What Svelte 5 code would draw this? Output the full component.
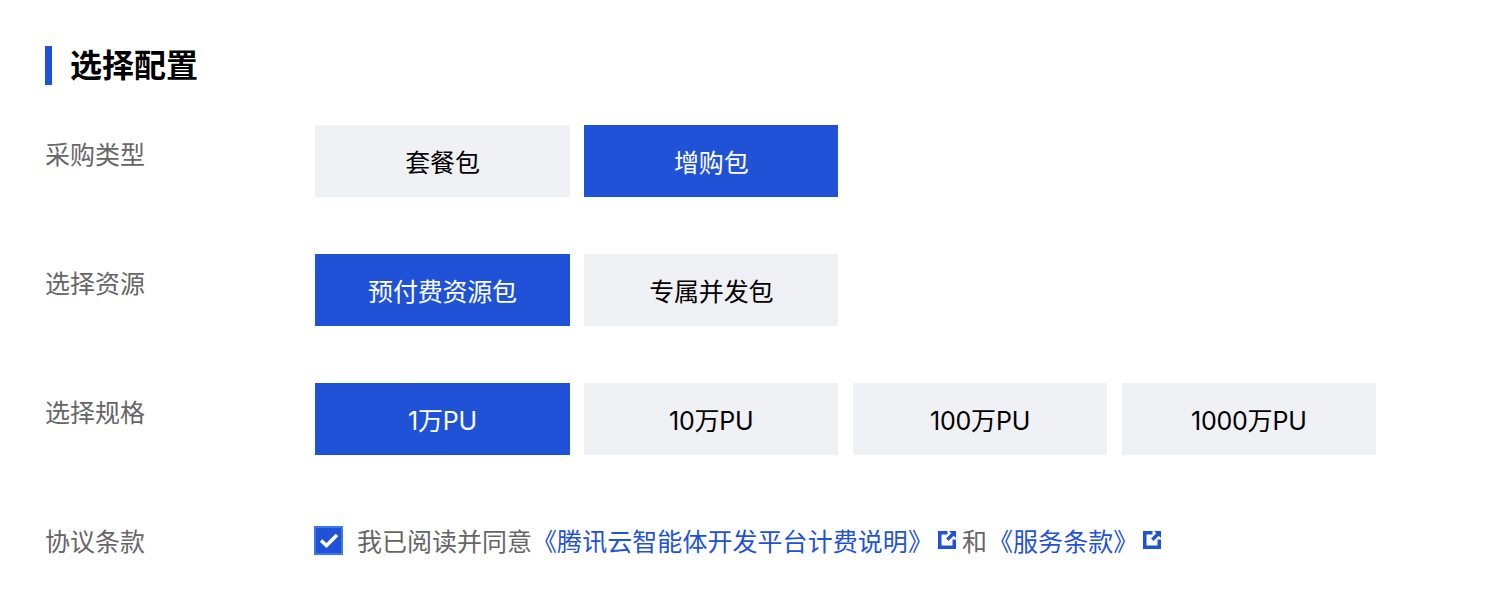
<script lang="ts">
  const ROWS = [
    { label: '采购类型', options: ['套餐包', '增购包'], active: 1 },
    { label: '选择资源', options: ['预付费资源包', '专属并发包'], active: 0 },
    { label: '选择规格', options: ['1万PU', '10万PU', '100万PU', '1000万PU'], active: 0 },
  ];
</script>

{#snippet linkIcon()}
  <svg class="ext" viewBox="0 0 18 18" aria-hidden="true">
    <path fill="#1f52d6" fill-rule="evenodd" d="M0 0h9.500v3.500H3.500v11h11V8.500H18V18H0z" />
    <path fill="#1f52d6" d="M11 0h7v7l-2.300-2.300-5.200 5.200-2.400-2.400 5.200-5.200z" />
  </svg>
{/snippet}

<main class="page">
  <h2 class="title">选择配置</h2>

  {#each ROWS as row (row.label)}
    <div class="row">
      <div class="label">{row.label}</div>
      <div class="options">
        {#each row.options as opt, i (opt)}
          <button type="button" class="option" class:active={i === row.active}>{opt}</button>
        {/each}
      </div>
    </div>
  {/each}

  <div class="row agree">
    <div class="label">协议条款</div>
    <div class="terms">
      <span class="check">
        <svg viewBox="0 0 20 15" aria-hidden="true">
          <path d="M2 7.500l5.500 5L18 2" fill="none" stroke="#fff" stroke-width="3.600" />
        </svg>
      </span>
      <span class="text">我已阅读并同意</span>
      <span class="link">《腾讯云智能体开发平台计费说明》</span>
      {@render linkIcon()}
      <span class="text and">和</span>
      <span class="link">《服务条款》</span>
      {@render linkIcon()}
    </div>
  </div>
</main>

<style>
  :global(body) {
    margin: 0;
    background: #fff;
  }

  .page {
    padding: 46px 45px 0;
    font-family: Inter, "Noto Sans CJK SC", sans-serif;
  }

  .title {
    margin: 0 0 40px;
    height: 39px;
    line-height: 39px;
    border-left: 7px solid #1f52d6;
    padding-left: 18px;
    font-size: 32px;
    font-weight: 700;
    color: #000;
  }

  .row {
    display: flex;
    margin-bottom: 57px;
  }

  .label {
    width: 270px;
    flex-shrink: 0;
    padding-top: 12px;
    font-size: 25px;
    line-height: 36px;
    color: #666;
  }

  .options {
    display: flex;
    gap: 14.5px;
    margin-left: 0.4px;
  }

  .option {
    appearance: none;
    width: 254.25px;
    height: 72px;
    border: none;
    padding: 0;
    background: #f0f1f5;
    color: #000;
    font: inherit;
    font-size: 25px;
    letter-spacing: -0.2px;
  }

  .option.active {
    background: #1f52d6;
    color: #fff;
  }

  .agree {
    margin: 0;
  }

  .terms {
    display: flex;
    align-items: center;
    height: 56px;
    margin-left: -1px;
    font-size: 25px;
  }

  .check {
    display: flex;
    align-items: center;
    justify-content: center;
    box-sizing: border-box;
    width: 29px;
    height: 29px;
    margin-right: 14px;
    background: #1f52d6;
    border: 2px solid #3b78f0;
  }

  .check svg {
    width: 20px;
    height: 15px;
    flex-shrink: 0;
  }

  .text {
    color: #666;
  }

  .link {
    color: #1f52d6;
    letter-spacing: 0.06px;
  }

  .ext {
    width: 18px;
    height: 18px;
    margin-left: 5px;
    flex-shrink: 0;
  }

  .and {
    margin-left: 6px;
    margin-right: 1px;
  }
</style>
